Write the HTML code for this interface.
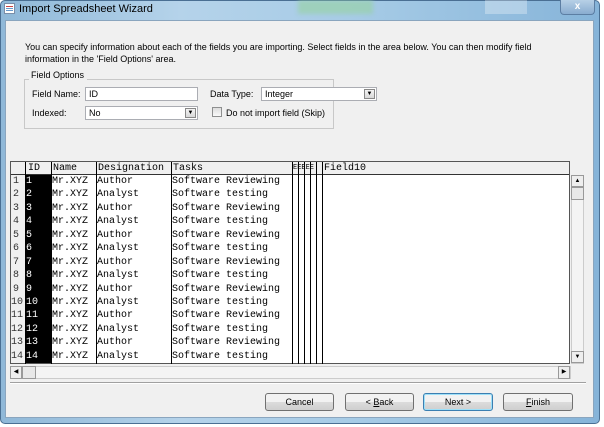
<!DOCTYPE html>
<html><head><style>
*{margin:0;padding:0;box-sizing:border-box}
body{width:604px;height:427px;overflow:hidden;background:#fff;font-family:"Liberation Sans",sans-serif;font-size:9px;color:#000;position:relative}
.a{position:absolute}
.win{left:0;top:0;width:600px;height:424px;background:linear-gradient(90deg,#8fb8d8,#b5d3ea 30%,#a6cbe6 60%,#86b4d9);border:1px solid #4a6f93;border-radius:5px}
.client{left:5px;top:20px;width:589px;height:398px;background:#f0f0f0;border:1px solid #8aa5be}
.mono{font-family:"Liberation Mono",monospace;font-size:10px}
.box{background:#fff;border:1px solid #abadb3;height:14px;padding-left:3px;line-height:12px;font-size:9px}
.dd{position:absolute;right:1px;top:1px;width:11px;height:10px;background:linear-gradient(#f4f4f4,#d8d8d8);border:1px solid #888;font-size:6px;text-align:center;line-height:8px}
.btn{top:393px;height:18px;border:1px solid #707070;border-radius:3px;background:linear-gradient(#f2f2f2 50%,#dcdcdc 50%,#cfcfcf);text-align:center;line-height:16px;font-size:9px}
.vl{width:1px;background:#000;top:162px;height:202px}
.cell{position:absolute;white-space:pre}
</style></head><body>
<div class="a win"></div>
<div class="a" style="left:4px;top:3px;width:11px;height:11px;background:#fff;border:1px solid #7a8ea8"><div style="margin:2px 1px;height:1px;background:#c44;box-shadow:0 2px #69c,0 4px #69c"></div></div>
<div class="a" style="left:19px;top:3px;font-size:11px;color:#000">Import Spreadsheet Wizard</div>
<div class="a" style="left:298px;top:0;width:75px;height:14px;background:rgba(150,210,160,.6);filter:blur(2px)"></div>
<div class="a" style="left:485px;top:0;width:42px;height:14px;background:rgba(255,255,255,.3)"></div>
<div class="a" style="left:560px;top:0;width:35px;height:15px;background:linear-gradient(#b7d0e6,#89acd0);border:1px solid #5c7ea3;border-top:none;border-radius:0 0 4px 4px;color:#fff;font-weight:bold;font-size:10px;text-align:center;line-height:13px">x</div>
<div class="a client"></div>
<div class="a" style="left:25px;top:41px;font-size:9px;line-height:12px;width:520px">You can specify information about each of the fields you are importing. Select fields in the area below. You can then modify field information in the 'Field Options' area.</div>
<div class="a" style="left:24px;top:79px;width:310px;height:50px;border:1px solid #c8c8c8"></div>
<div class="a" style="left:29px;top:70px;background:#f0f0f0;padding:0 3px 0 2px">Field Options</div>
<div class="a" style="left:32px;top:89px">Field Name:</div>
<div class="a box" style="left:85px;top:87px;width:113px">ID</div>
<div class="a" style="left:210px;top:89px">Data Type:</div>
<div class="a box" style="left:261px;top:87px;width:116px">Integer<div class="dd">▼</div></div>
<div class="a" style="left:32px;top:108px">Indexed:</div>
<div class="a box" style="left:85px;top:106px;width:113px">No<div class="dd">▼</div></div>
<div class="a" style="left:212px;top:107px;width:10px;height:10px;border:1px solid #8e8f8f;background:linear-gradient(#ddd,#fafafa)"></div>
<div class="a" style="left:226px;top:108px">Do not import field (Skip)</div>
<!-- grid -->
<div class="a" style="left:10px;top:161px;width:560px;height:203px;background:#fff;border:1px solid #555"></div>
<div class="a" style="left:11px;top:162px;width:558px;height:13px;background:#f0f0f0;border-bottom:1px solid #333"></div>
<div class="a" style="left:11px;top:175px;width:14px;height:188px;background:#f0f0f0"></div>
<div class="a" style="left:25px;top:175px;width:26px;height:188px;background:#000"></div>
<div class="a vl" style="left:25px"></div><div class="a vl" style="left:51px"></div><div class="a vl" style="left:96px"></div><div class="a vl" style="left:171px"></div><div class="a vl" style="left:292px"></div><div class="a vl" style="left:298px"></div><div class="a vl" style="left:304px"></div><div class="a vl" style="left:310px"></div><div class="a vl" style="left:316px"></div><div class="a vl" style="left:322px"></div>
<div class="a mono" style="left:0;top:162px;width:570px;height:13px;line-height:13px">
<span class="cell" style="left:28px">ID</span><span class="cell" style="left:53px">Name</span><span class="cell" style="left:98px">Designation</span><span class="cell" style="left:173px">Tasks</span><span class="cell" style="left:293px;font-size:7px">EEEEE</span><span class="cell" style="left:324px">Field10</span></div>
<div class="a mono" style="left:0;top:175px;width:570px;line-height:13.45px">
<div style="position:relative;height:13.45px"><span class="cell" style="left:13px;color:#333">1</span><span class="cell" style="left:26px;color:#fff">1</span><span class="cell" style="left:52px">Mr.XYZ</span><span class="cell" style="left:97px">Author</span><span class="cell" style="left:172px">Software Reviewing</span></div>
<div style="position:relative;height:13.45px"><span class="cell" style="left:13px;color:#333">2</span><span class="cell" style="left:26px;color:#fff">2</span><span class="cell" style="left:52px">Mr.XYZ</span><span class="cell" style="left:97px">Analyst</span><span class="cell" style="left:172px">Software testing</span></div>
<div style="position:relative;height:13.45px"><span class="cell" style="left:13px;color:#333">3</span><span class="cell" style="left:26px;color:#fff">3</span><span class="cell" style="left:52px">Mr.XYZ</span><span class="cell" style="left:97px">Author</span><span class="cell" style="left:172px">Software Reviewing</span></div>
<div style="position:relative;height:13.45px"><span class="cell" style="left:13px;color:#333">4</span><span class="cell" style="left:26px;color:#fff">4</span><span class="cell" style="left:52px">Mr.XYZ</span><span class="cell" style="left:97px">Analyst</span><span class="cell" style="left:172px">Software testing</span></div>
<div style="position:relative;height:13.45px"><span class="cell" style="left:13px;color:#333">5</span><span class="cell" style="left:26px;color:#fff">5</span><span class="cell" style="left:52px">Mr.XYZ</span><span class="cell" style="left:97px">Author</span><span class="cell" style="left:172px">Software Reviewing</span></div>
<div style="position:relative;height:13.45px"><span class="cell" style="left:13px;color:#333">6</span><span class="cell" style="left:26px;color:#fff">6</span><span class="cell" style="left:52px">Mr.XYZ</span><span class="cell" style="left:97px">Analyst</span><span class="cell" style="left:172px">Software testing</span></div>
<div style="position:relative;height:13.45px"><span class="cell" style="left:13px;color:#333">7</span><span class="cell" style="left:26px;color:#fff">7</span><span class="cell" style="left:52px">Mr.XYZ</span><span class="cell" style="left:97px">Author</span><span class="cell" style="left:172px">Software Reviewing</span></div>
<div style="position:relative;height:13.45px"><span class="cell" style="left:13px;color:#333">8</span><span class="cell" style="left:26px;color:#fff">8</span><span class="cell" style="left:52px">Mr.XYZ</span><span class="cell" style="left:97px">Analyst</span><span class="cell" style="left:172px">Software testing</span></div>
<div style="position:relative;height:13.45px"><span class="cell" style="left:13px;color:#333">9</span><span class="cell" style="left:26px;color:#fff">9</span><span class="cell" style="left:52px">Mr.XYZ</span><span class="cell" style="left:97px">Author</span><span class="cell" style="left:172px">Software Reviewing</span></div>
<div style="position:relative;height:13.45px"><span class="cell" style="left:11px;color:#333">10</span><span class="cell" style="left:26px;color:#fff">10</span><span class="cell" style="left:52px">Mr.XYZ</span><span class="cell" style="left:97px">Analyst</span><span class="cell" style="left:172px">Software testing</span></div>
<div style="position:relative;height:13.45px"><span class="cell" style="left:11px;color:#333">11</span><span class="cell" style="left:26px;color:#fff">11</span><span class="cell" style="left:52px">Mr.XYZ</span><span class="cell" style="left:97px">Author</span><span class="cell" style="left:172px">Software Reviewing</span></div>
<div style="position:relative;height:13.45px"><span class="cell" style="left:11px;color:#333">12</span><span class="cell" style="left:26px;color:#fff">12</span><span class="cell" style="left:52px">Mr.XYZ</span><span class="cell" style="left:97px">Analyst</span><span class="cell" style="left:172px">Software testing</span></div>
<div style="position:relative;height:13.45px"><span class="cell" style="left:11px;color:#333">13</span><span class="cell" style="left:26px;color:#fff">13</span><span class="cell" style="left:52px">Mr.XYZ</span><span class="cell" style="left:97px">Author</span><span class="cell" style="left:172px">Software Reviewing</span></div>
<div style="position:relative;height:13.45px"><span class="cell" style="left:11px;color:#333">14</span><span class="cell" style="left:26px;color:#fff">14</span><span class="cell" style="left:52px">Mr.XYZ</span><span class="cell" style="left:97px">Analyst</span><span class="cell" style="left:172px">Software testing</span></div>
</div>
<!-- scrollbars -->
<div class="a" style="left:571px;top:175px;width:13px;height:189px;background:#f4f4f4;border:1px solid #ccc"></div>
<div class="a" style="left:571px;top:175px;width:13px;height:12px;border:1px solid #999;background:#eee;font-size:6px;text-align:center;line-height:10px">▲</div>
<div class="a" style="left:571px;top:187px;width:13px;height:13px;border:1px solid #999;background:#e8e8e8"></div>
<div class="a" style="left:571px;top:351px;width:13px;height:12px;border:1px solid #999;background:#eee;font-size:6px;text-align:center;line-height:10px">▼</div>
<div class="a" style="left:10px;top:366px;width:561px;height:13px;background:#f4f4f4;border:1px solid #ccc"></div>
<div class="a" style="left:10px;top:366px;width:12px;height:13px;border:1px solid #999;background:#eee;font-size:6px;text-align:center;line-height:11px">◀</div>
<div class="a" style="left:22px;top:366px;width:14px;height:13px;border:1px solid #999;background:#e8e8e8"></div>
<div class="a" style="left:558px;top:366px;width:12px;height:13px;border:1px solid #999;background:#eee;font-size:6px;text-align:center;line-height:11px">▶</div>
<div class="a" style="left:10px;top:382px;width:576px;height:2px;border-top:1px solid #a0a0a0;border-bottom:1px solid #fff"></div>
<div class="a btn" style="left:265px;width:69px">Cancel</div>
<div class="a btn" style="left:345px;width:69px">&lt; <u>B</u>ack</div>
<div class="a btn" style="left:423px;width:70px;border-color:#3c7fb1;box-shadow:inset 0 0 0 1px #9ee0f8">Next &gt;</div>
<div class="a btn" style="left:503px;width:70px"><u>F</u>inish</div>
</body></html>
